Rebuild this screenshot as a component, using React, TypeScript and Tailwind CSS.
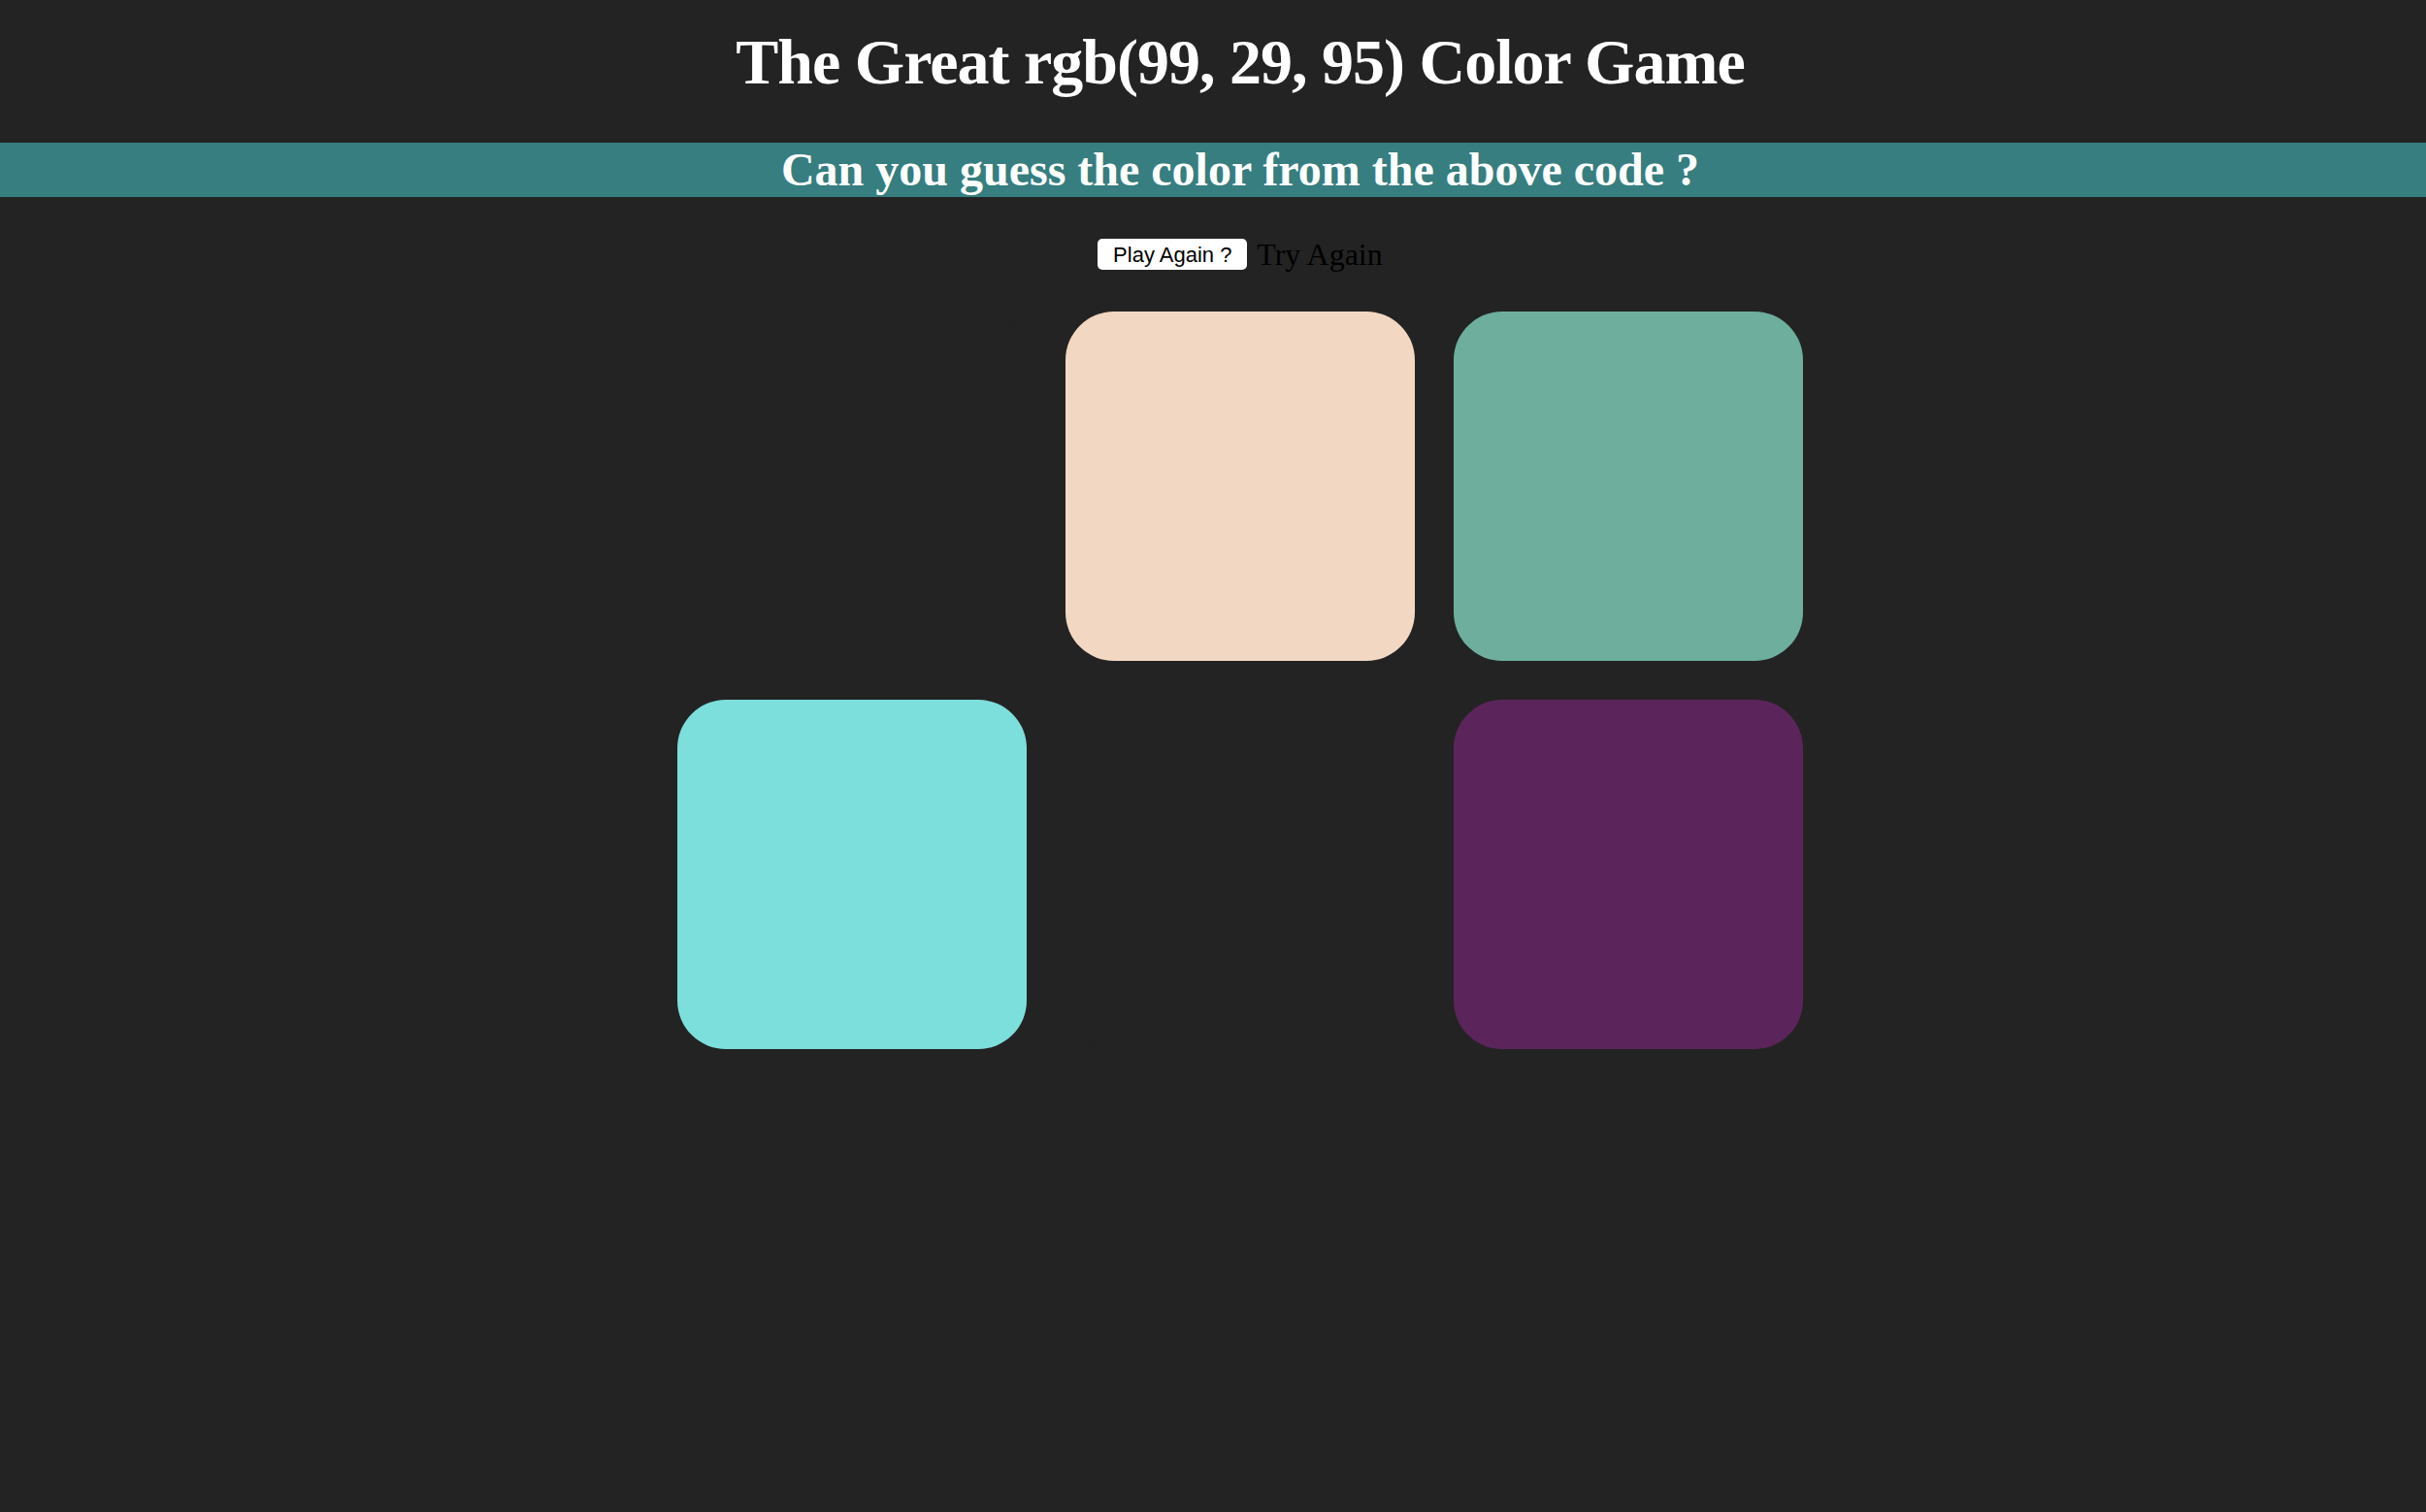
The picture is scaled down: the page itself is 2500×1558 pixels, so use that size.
export default function App() {
  const squares = [
    "#232323",
    "#f2d8c2",
    "#6dae9d",
    "#7ddfdc",
    "#232323",
    "#5b255b",
  ];

  return (
    <div className="min-h-screen w-full bg-[#232323] font-['Liberation_Serif',serif] text-white">
      <h1 className="pl-[56px] pt-[21px] pb-[40px] text-center text-[66px] font-bold leading-[86px] tracking-[-1px]">
        The Great rgb(99, 29, 95) Color Game
      </h1>
      <h2 className="h-[56px] bg-[#367e7f] pl-[56px] text-center text-[48px] font-bold leading-[56px]">
        Can you guess the color from the above code ?
      </h2>
      <div className="mt-[43px] flex items-center justify-center gap-[10px] pl-[56px]">
        <button className="h-[32px] w-[154px] rounded-[5px] bg-white font-['Liberation_Sans',sans-serif] text-[22px] text-black">
          Play Again ?
        </button>
        <span className="text-[32px] leading-[32px] text-black">Try Again</span>
      </div>
      <div className="mt-[43px] pl-[56px]">
        <div className="mx-auto grid w-[1200px] grid-cols-3 gap-[40px] px-[20px]">
          {squares.map((c, i) => (
            <div
              key={i}
              className="h-[360px] w-[360px] rounded-[50px]"
              style={{ backgroundColor: c }}
            />
          ))}
        </div>
      </div>
    </div>
  );
}
